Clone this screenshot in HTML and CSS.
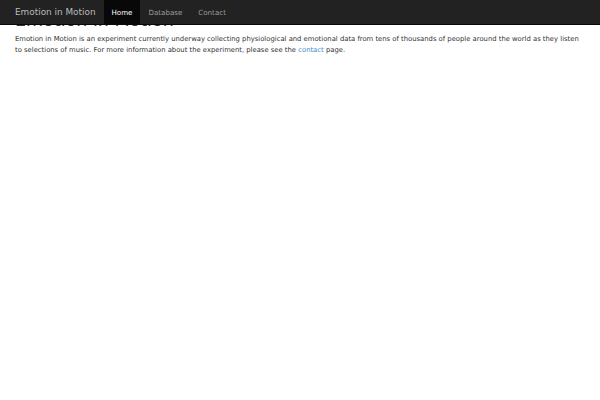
FILE: index.html
```html
<!DOCTYPE html>
<html>
<head>
<meta charset="utf-8">
<link rel="stylesheet" href="styles.css">
</head>
<body>
<div class="navbar">
  <a class="brand" href="#">Emotion in Motion</a>
  <ul class="nav">
    <li class="active"><a href="#">Home</a></li>
    <li><a href="#">Database</a></li>
    <li><a href="#">Contact</a></li>
  </ul>
</div>
<div class="container">
  <h1 class="title">Emotion in Motion</h1>
  <p class="intro">Emotion in Motion is an experiment currently underway collecting physiological and emotional data from tens of thousands of people around the world as they listen to selections of music. For more information about the experiment, please see the <a href="#">contact</a> page.</p>
</div>
</body>
</html>
```
FILE: styles.css
```css
* { box-sizing: border-box; }
html, body { margin: 0; padding: 0; background: #fff; }
body {
  font-family: "DejaVu Sans", sans-serif;
  font-size: 6.82px;
  line-height: 11px;
  color: #333;
}
.navbar {
  position: fixed;
  top: 0; left: 0; right: 0;
  height: 25px;
  background: #222;
  border-bottom: 1px solid #080808;
  display: flex;
  align-items: stretch;
  z-index: 10;
}
.brand {
  display: flex;
  align-items: center;
  padding: 1px 8px 0 15px;
  font-size: 8.9px;
  color: #bbb;
  text-decoration: none;
}
.nav {
  display: flex;
  list-style: none;
  margin: 0;
  padding: 0;
}
.nav li { display: flex; }
.nav a {
  display: flex;
  align-items: center;
  padding: 0 8px;
  font-size: 7.1px;
  color: #9d9d9d;
  text-decoration: none;
}
.nav li.active a { background: #080808; color: #fff; }
.container { padding: 0 18px 0 15px; }
.title {
  margin: 10px 0 4px;
  font-size: 17.5px;
  line-height: 20px;
  font-weight: 500;
  color: #333;
}
.intro { margin: 0; }
.intro a { color: #428bca; text-decoration: none; }
```
